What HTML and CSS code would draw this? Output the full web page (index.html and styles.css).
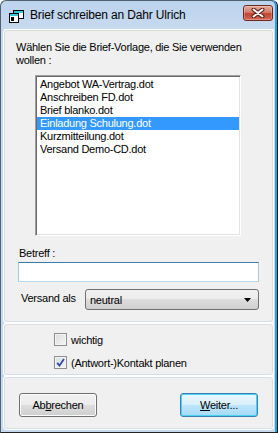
FILE: index.html
```html
<!DOCTYPE html>
<html lang="de">
<head>
    <meta charset="UTF-8">
    <title>Brief schreiben an Dahr Ulrich</title>
    <link rel="stylesheet" href="styles.css">
</head>
<body>
    <div class="window">
        <div class="titlebar">
            <svg class="app-icon" width="15" height="13" viewBox="0 0 15 13">
                <rect x="4.5" y="0.5" width="10" height="8" fill="#fff" stroke="#000"/>
                <rect x="5" y="1" width="9" height="2" fill="#35c8dc"/>
                <rect x="0.5" y="3.5" width="9" height="9" fill="#fff" stroke="#000"/>
                <rect x="1" y="4" width="8" height="2" fill="#35c8dc"/>
                <rect x="2" y="7" width="3" height="4" fill="#000"/>
            </svg>
            <span class="title">Brief schreiben an Dahr Ulrich</span>
            <div class="close">
                <svg width="14" height="10" viewBox="0 0 14 10">
                    <path d="M2.5 1.5 L11.5 8.5 M11.5 1.5 L2.5 8.5" stroke="#5a1b14" stroke-width="4" stroke-linecap="round"/>
                    <path d="M2.5 1.5 L11.5 8.5 M11.5 1.5 L2.5 8.5" stroke="#fff" stroke-width="2" stroke-linecap="round"/>
                </svg>
            </div>
        </div>
        <div class="client">
            <div class="group main">
                <p class="prompt">Wählen Sie die Brief-Vorlage, die Sie verwenden<br>wollen :</p>
                <div class="listbox">
                    <div class="item">Angebot WA-Vertrag.dot</div>
                    <div class="item">Anschreiben FD.dot</div>
                    <div class="item">Brief blanko.dot</div>
                    <div class="item selected">Einladung Schulung.dot</div>
                    <div class="item">Kurzmitteilung.dot</div>
                    <div class="item">Versand Demo-CD.dot</div>
                </div>
                <label class="field-label">Betreff :</label>
                <div class="textbox"></div>
                <div class="send-row">
                    <span class="send-label">Versand als</span>
                    <div class="combo">
                        <span>neutral</span>
                        <svg width="7" height="4" viewBox="0 0 7 4"><path d="M0 0 H7 L3.5 4 Z" fill="#000"/></svg>
                    </div>
                </div>
            </div>
            <div class="group options">
                <div class="check">
                    <span class="box"></span>
                    <span>wichtig</span>
                </div>
                <div class="check">
                    <span class="box">
                        <svg width="9" height="9" viewBox="0 0 9 9"><path d="M1.2 4.8 L3.5 7.5 L8 1" fill="none" stroke="#2b4fa6" stroke-width="1.8"/></svg>
                    </span>
                    <span>(Antwort-)Kontakt planen</span>
                </div>
            </div>
            <div class="group actions">
                <button class="btn">Ab<u>b</u>rechen</button>
                <button class="btn default"><u>W</u>eiter...</button>
            </div>
        </div>
    </div>
</body>
</html>
```

FILE: styles.css
```css
body {
    margin: 0;
    background: #fff;
    font-family: 'Liberation Sans', Arial, sans-serif;
    font-size: 11px;
    letter-spacing: -0.25px;
    color: #000;
}
.window {
    width: 278px;
    height: 433px;
    box-sizing: border-box;
    border: 1px solid #51606f;
    border-right-color: #111;
    border-bottom-color: #222;
    border-radius: 6px 6px 0 0;
    background: linear-gradient(#bcd3ee, #c8daef 30px, #c6d9ef);
    box-shadow: inset -2px 0 0 #2a9de6;
    display: flex;
    flex-direction: column;
    padding: 0 3px 3px 3px;
}
.titlebar {
    height: 28px;
    display: flex;
    align-items: center;
    padding-left: 5px;
}
.app-icon {
    margin-right: 6px;
    margin-top: 2px;
}
.title {
    font-size: 12px;
    letter-spacing: -0.15px;
    flex: 1;
}
.close {
    width: 28px;
    height: 14px;
    border: 1px solid #6d2a22;
    border-radius: 3px;
    background: linear-gradient(#e6ab9d, #d57b69 45%, #c1412f 55%, #d26c57);
    box-shadow: inset 0 0 0 1px rgba(255, 255, 255, 0.25);
    display: flex;
    align-items: center;
    justify-content: center;
    align-self: flex-start;
    margin: 4px 1px 0 0;
}
.client {
    flex: 1;
    background: #f0f0f0;
    display: flex;
    flex-direction: column;
    gap: 2px;
}
.group {
    border: 1px solid #d5dfe5;
    border-radius: 3px;
    box-shadow: 0 0 0 1px #fff;
    margin: 0 1px 0 0;
}
.main {
    height: 290px;
    padding: 0 0 0 13px;
    margin-top: 1px;
}
.prompt {
    margin: 10px 0 0 -2px;
    line-height: 13px;
}
.listbox {
    margin: 8px 0 0 17px;
    width: 202px;
    height: 155px;
    background: #fff;
    border-top: 1px solid #a0a0a0;
    border-left: 1px solid #a0a0a0;
    border-right: 1px solid #fff;
    border-bottom: 1px solid #fff;
    box-shadow: inset 1px 1px 0 #696969, inset -1px -1px 0 #e3e3e3;
    padding: 2px 1px;
}
.item {
    height: 13px;
    line-height: 13px;
    padding-left: 3px;
    white-space: nowrap;
}
.selected {
    background: #3399ff;
    color: #fff;
}
.field-label {
    display: block;
    margin: 11px 0 0 1px;
    height: 13px;
    line-height: 13px;
}
.textbox {
    margin-top: 2px;
    width: 239px;
    height: 18px;
    background: #fff;
    border: 1px solid #b7d9ed;
    border-top-color: #3d7bad;
    border-left-color: #a4c9e3;
    border-right-color: #a4c9e3;
}
.send-row {
    display: flex;
    align-items: center;
    margin-top: 7px;
}
.send-label {
    width: 64px;
    padding-left: 3px;
    margin-top: -3px;
}
.combo {
    width: 161px;
    height: 19px;
    border: 1px solid #707070;
    border-radius: 3px;
    background: linear-gradient(#f2f2f2, #ebebeb 50%, #dddddd 50%, #cfcfcf);
    display: flex;
    align-items: center;
    justify-content: space-between;
    padding: 0 7px 0 4px;
}
.options {
    height: 51px;
    box-sizing: border-box;
    padding: 8px 0 0 49px;
    display: flex;
    flex-direction: column;
    gap: 10px;
}
.check {
    display: flex;
    align-items: center;
    gap: 4px;
    height: 13px;
}
.box {
    width: 11px;
    height: 11px;
    border: 1px solid #8f8f8f;
    background: linear-gradient(135deg, #dcdcdc, #f6f6f6);
    box-shadow: inset 0 0 0 1px #f4f4f4;
    display: flex;
    align-items: center;
    justify-content: center;
}
.actions {
    flex: 1;
    display: flex;
    justify-content: space-between;
    align-items: flex-start;
    padding: 15px 14px 0 14px;
}
.btn {
    width: 78px;
    height: 24px;
    font-family: 'Liberation Sans', Arial, sans-serif;
    font-size: 11px;
    letter-spacing: -0.25px;
    color: #000;
    border: 1px solid #707070;
    border-radius: 3px;
    background: linear-gradient(#f2f2f2, #ebebeb 50%, #dddddd 50%, #cfcfcf);
    box-shadow: inset 0 0 0 1px #fcfcfc;
    padding: 0;
}
.btn.default {
    border-color: #3c7fb1;
    background: linear-gradient(#eaf6fd, #d9f0fc 50%, #bee6fd 50%, #a7d9f5);
    box-shadow: inset 0 0 0 1px #48d4f4;
}
```
